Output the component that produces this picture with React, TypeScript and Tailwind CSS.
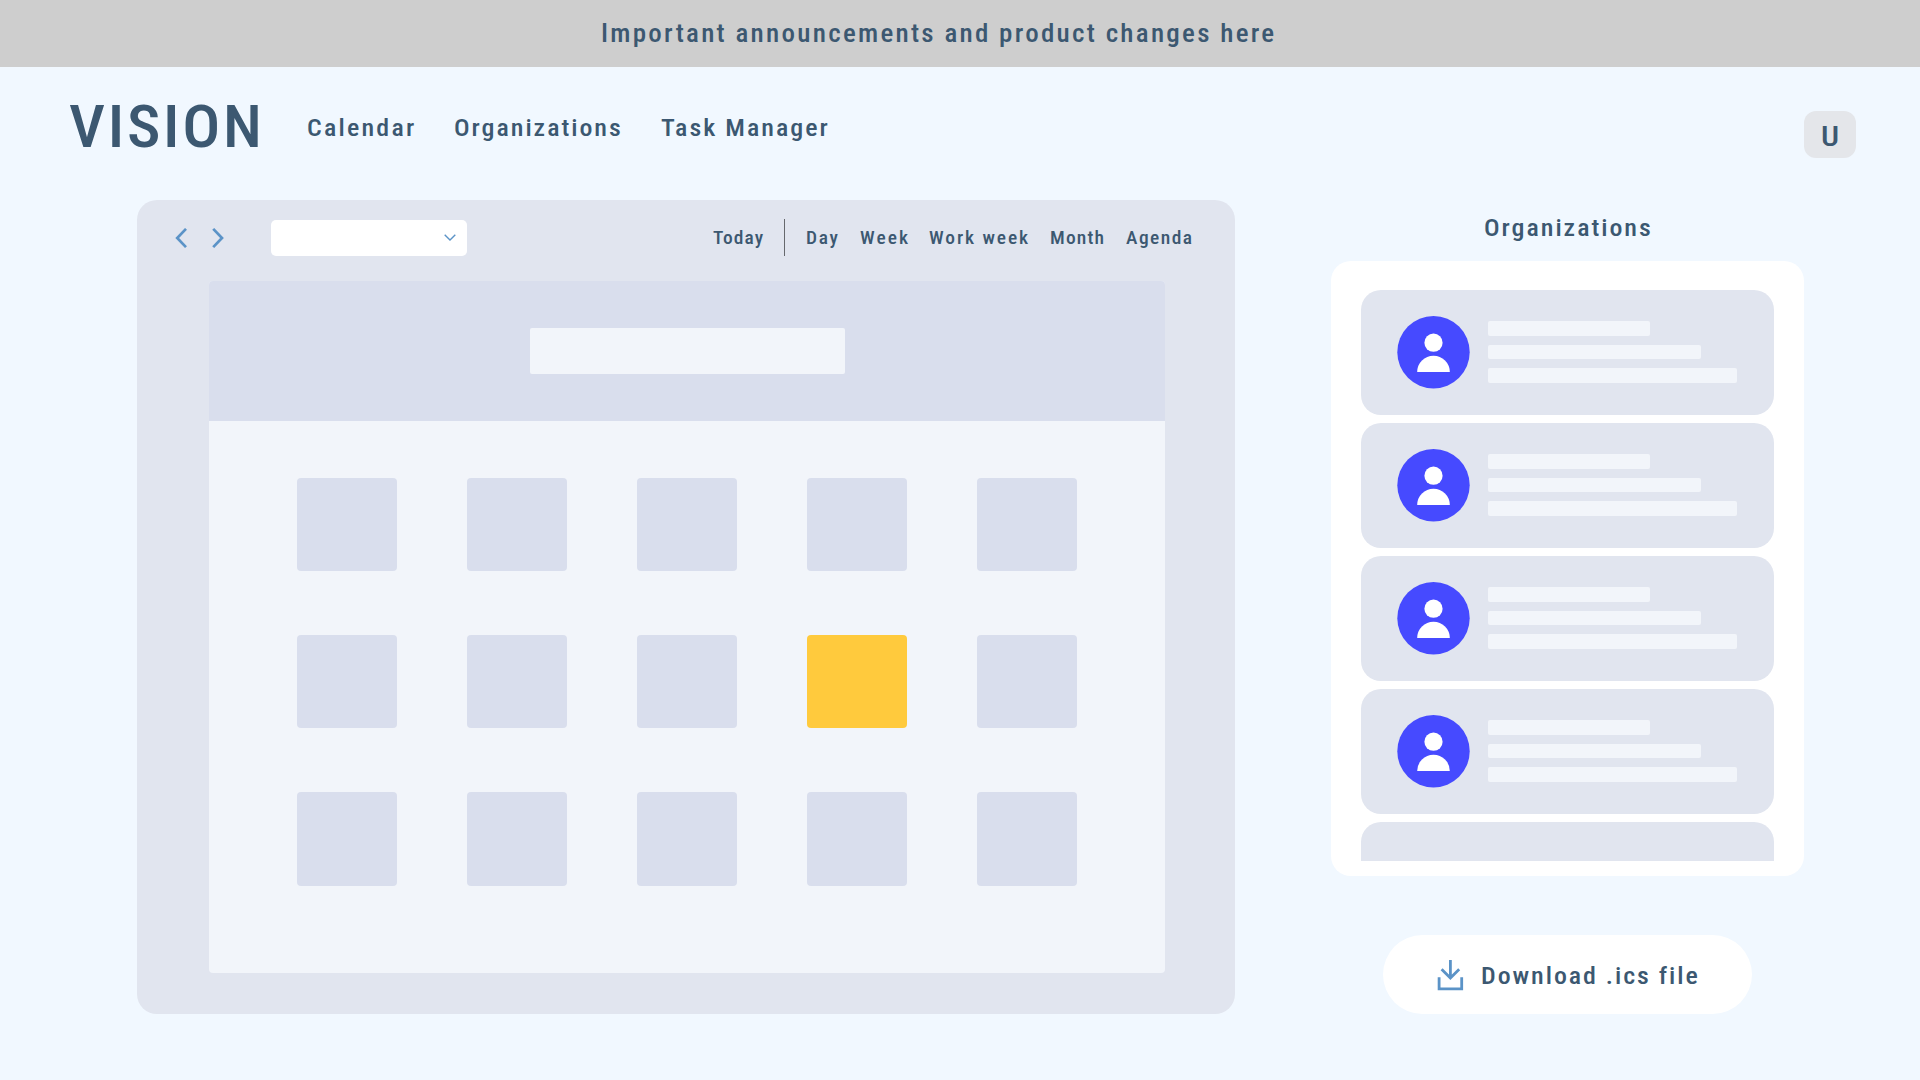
const navItems = [
  { label: 'Calendar', width: 'w-[147px]', tracking: 'tracking-[2.05px]' },
  { label: 'Organizations', width: 'w-[207px]', tracking: 'tracking-[1.82px]' },
  { label: 'Task Manager', width: 'w-[180px]', tracking: 'tracking-[1.88px]' },
]

const views = [
  { label: 'Day', width: 'w-[54px]', tracking: 'tracking-[1.6px]' },
  { label: 'Week', width: 'w-[69px]', tracking: 'tracking-[1.9px]' },
  { label: 'Work week', width: 'w-[120.5px]', tracking: 'tracking-[1.78px]' },
  { label: 'Month', width: 'w-[76px]', tracking: 'tracking-[1.1px]' },
  { label: 'Agenda', width: 'w-[70px]', tracking: 'tracking-[1.35px]' },
]

const HIGHLIGHTED_DAY = 8

function Label({ children, className }: { children: string; className: string }) {
  return <span className={`inline-block origin-left scale-x-[1.08] whitespace-nowrap ${className}`}>{children}</span>
}

function Header() {
  return (
    <header className="flex h-[121px] items-center pl-[69px]">
      <h1 className="w-[237.5px] text-[58.5px] leading-none">
        <Label className="tracking-[2.5px]">VISION</Label>
      </h1>
      <nav className="flex text-[24px] leading-8">
        {navItems.map((item) => (
          <a key={item.label} className={item.width}>
            <Label className={item.tracking}>{item.label}</Label>
          </a>
        ))}
      </nav>
      <button className="mt-[14px] mr-16 ml-auto flex h-[47px] w-[52px] items-center justify-center rounded-xl bg-[#e4e6ea] pt-[5px] text-[28.5px] leading-none">
        <span className="scale-x-[1.12]">U</span>
      </button>
    </header>
  )
}

function Toolbar() {
  return (
    <div className="flex h-[75px] items-center text-[18px] leading-6">
      <svg className="ml-[38px] h-5 w-3" viewBox="0 0 12 20" fill="none" stroke="#5b93c7" strokeWidth="2.7">
        <path d="M11 .9 2.2 10l8.8 9.1" />
      </svg>
      <svg className="ml-[25px] h-5 w-3" viewBox="0 0 12 20" fill="none" stroke="#5b93c7" strokeWidth="2.7">
        <path d="M1.2.9 10 10l-8.8 9.1" />
      </svg>
      <div className="ml-[47px] flex h-9 w-[196px] items-center justify-end rounded-[5px] bg-white pr-[11px]">
        <svg className="h-[7px] w-3" viewBox="0 0 12 7" fill="none" stroke="#5b93c7" strokeWidth="1.4">
          <path d="M.7.7 6 5.9 11.3.7" />
        </svg>
      </div>
      <div className="ml-[246px] w-[71px]">
        <Label className="tracking-[1px]">Today</Label>
      </div>
      <div className="mr-[21px] h-[37px] w-px bg-[#66686d]" />
      {views.map((view) => (
        <div key={view.label} className={view.width}>
          <Label className={view.tracking}>{view.label}</Label>
        </div>
      ))}
    </div>
  )
}

function Calendar() {
  return (
    <section className="h-[814px] w-[1098px] rounded-[20px] bg-[#e1e5ef]">
      <Toolbar />
      <div className="mt-[6px] ml-[71.5px] h-[692px] w-[956.5px] overflow-hidden rounded-[4px] bg-[#f2f5fa]">
        <div className="flex h-[140px] items-start bg-[#d9deed] pt-[46.5px] pl-[321px]">
          <div className="h-[46.5px] w-[315px] rounded-[2px] bg-[#f2f5fa]" />
        </div>
        <div className="grid grid-cols-[repeat(5,100px)] gap-x-[70px] gap-y-[64px] pt-[57px] pl-[88px]">
          {Array.from({ length: 15 }, (_, day) => (
            <div
              key={day}
              className={`h-[93.2px] rounded-[4px] ${day === HIGHLIGHTED_DAY ? 'bg-[#ffca3d]' : 'bg-[#d9deed]'}`}
            />
          ))}
        </div>
      </div>
    </section>
  )
}

function OrganizationCard() {
  return (
    <div className="flex h-[125px] shrink-0 items-center rounded-[20px] bg-[#e1e5ef] pl-9">
      <svg className="h-[73px] w-[73px]" viewBox="0 0 73 73">
        <circle cx="36.5" cy="36.2" r="36.2" fill="#464aff" />
        <circle cx="36.5" cy="26.7" r="9.1" fill="#fff" />
        <path d="M20.2 55.9a16.3 16.1 0 0 1 32.6 0z" fill="#fff" />
      </svg>
      <div className="ml-[18px] flex flex-col gap-[8.6px]">
        <div className="h-[14.8px] w-[162px] rounded-[2px] bg-[#f2f5fa]" />
        <div className="h-[14.8px] w-[213px] rounded-[2px] bg-[#f2f5fa]" />
        <div className="h-[14.8px] w-[249px] rounded-[2px] bg-[#f2f5fa]" />
      </div>
    </div>
  )
}

function Sidebar() {
  return (
    <aside className="flex w-[473px] flex-col">
      <h2 className="mt-3 h-[49px] pl-[152.5px] text-[24px] leading-8">
        <Label className="tracking-[1.82px]">Organizations</Label>
      </h2>
      <div className="h-[615px] w-full rounded-[20px] bg-white px-[30px] pt-[28.5px]">
        <div className="flex h-[571px] flex-col gap-2 overflow-hidden">
          {Array.from({ length: 4 }, (_, i) => (
            <OrganizationCard key={i} />
          ))}
          <div className="h-[125px] shrink-0 rounded-[20px] bg-[#e1e5ef]" />
        </div>
      </div>
      <button className="mt-[59px] flex h-[79px] w-[369px] items-center self-center rounded-full bg-white pl-[54px] text-[24px]">
        <svg className="mt-px h-[31px] w-[27px]" viewBox="0 0 27 31" fill="none" stroke="#5b93c7" strokeWidth="2.8">
          <path d="M13.4 0v18.5M4.6 9.2l8.8 8.8 8.8-8.8M2.1 17.2v11.7h22.6V17.2" />
        </svg>
        <Label className="ml-[17px] pt-[2px] leading-7 tracking-[1.8px]">Download .ics file</Label>
      </button>
    </aside>
  )
}

export default function App() {
  return (
    <div className="h-[1080px] w-[1920px] overflow-hidden bg-[#f1f8ff] font-['Roboto_Condensed',Roboto,sans-serif] font-medium text-[#3c5871]">
      <div className="flex h-[67px] items-center bg-[#cecece] pt-px pl-[600.5px] text-[25px]">
        <Label className="tracking-[2.1px]">Important announcements and product changes here</Label>
      </div>
      <Header />
      <main className="mt-3 flex gap-24 pl-[137px]">
        <Calendar />
        <Sidebar />
      </main>
    </div>
  )
}
